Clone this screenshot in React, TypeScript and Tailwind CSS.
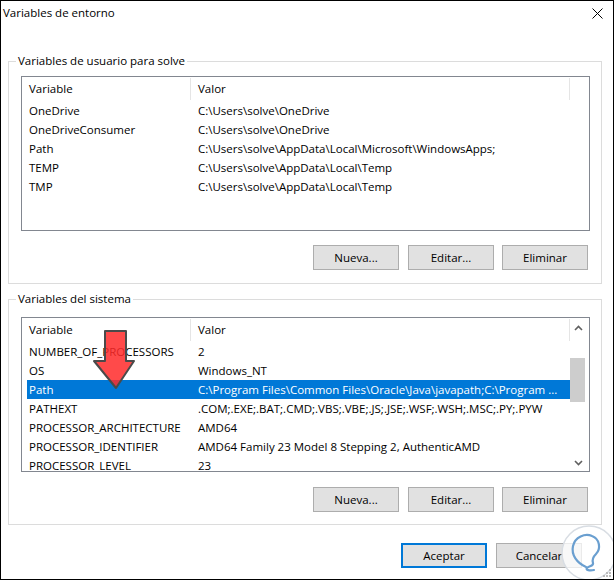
import React from "react";

type Row = { name: string; value: string };

const userRows: Row[] = [
  { name: "OneDrive", value: "C:\\Users\\solve\\OneDrive" },
  { name: "OneDriveConsumer", value: "C:\\Users\\solve\\OneDrive" },
  { name: "Path", value: "C:\\Users\\solve\\AppData\\Local\\Microsoft\\WindowsApps;" },
  { name: "TEMP", value: "C:\\Users\\solve\\AppData\\Local\\Temp" },
  { name: "TMP", value: "C:\\Users\\solve\\AppData\\Local\\Temp" },
];

const systemRows: Row[] = [
  { name: "NUMBER_OF_PROCESSORS", value: "2" },
  { name: "OS", value: "Windows_NT" },
  { name: "Path", value: "C:\\Program Files\\Common Files\\Oracle\\Java\\javapath;C:\\Program ..." },
  { name: "PATHEXT", value: ".COM;.EXE;.BAT;.CMD;.VBS;.VBE;.JS;.JSE;.WSF;.WSH;.MSC;.PY;.PYW" },
  { name: "PROCESSOR_ARCHITECTURE", value: "AMD64" },
  { name: "PROCESSOR_IDENTIFIER", value: "AMD64 Family 23 Model 8 Stepping 2, AuthenticAMD" },
  { name: "PROCESSOR_LEVEL", value: "23" },
];

function Chevron({ up }: { up?: boolean }) {
  return (
    <svg width="9" height="6" viewBox="0 0 9 6">
      <path
        d={up ? "M1 5 L4.5 1.5 L8 5" : "M1 1 L4.5 4.5 L8 1"}
        fill="none"
        stroke="#606060"
        strokeWidth="1.6"
      />
    </svg>
  );
}

function Scrollbar() {
  return (
    <div className="w-[17px] h-full flex flex-col">
      <div className="h-[20px] flex items-center justify-center">
        <Chevron up />
      </div>
      <div className="flex-1">
        <div className="mt-[20px] h-[44px] w-[15px] bg-[#cdcdcd]" />
      </div>
      <div className="h-[17px] flex items-center justify-center">
        <Chevron />
      </div>
    </div>
  );
}

function ListView({ rows, scroll, selected }: { rows: Row[]; scroll?: boolean; selected?: number }) {
  return (
    <div className="h-[155px] border border-[#828790] bg-white flex overflow-hidden">
      <div className="w-[548px] flex flex-col">
        {/* header */}
        <div className="h-[24px] shrink-0 flex">
          <div className="w-[169px] pl-[7px] flex items-center border-r border-[#e5e5e5] my-[1px]">Variable</div>
          <div className="flex-1 pl-[7px] flex items-center border-r border-[#e5e5e5] my-[1px]">Valor</div>
        </div>
        {/* rows */}
        <div className="flex-1 overflow-hidden">
          {rows.map((r, i) => (
            <div
              key={r.name}
              className={
                i === selected
                  ? "h-[19px] ml-[5px] flex items-center bg-[#0078d7] text-white"
                  : "h-[19px] ml-[5px] flex items-center"
              }
            >
              <div className="w-[164px] pl-[2px] whitespace-nowrap">{r.name}</div>
              <div className="flex-1 pl-[7px] whitespace-nowrap overflow-hidden">{r.value}</div>
            </div>
          ))}
        </div>
      </div>
      <div className="w-[18px]">{scroll && <Scrollbar />}</div>
    </div>
  );
}

function Btn({ label, primary, extra }: { label: string; primary?: boolean; extra?: string }) {
  return (
    <div
      className={
        (primary
          ? "border-2 border-[#0078d7] "
          : "border border-[#adadad] ") +
        "w-[86px] h-[25px] bg-[#e1e1e1] flex items-center justify-center " +
        (extra ?? "")
      }
    >
      {label}
    </div>
  );
}

function Group({ title, rows, scroll, selected, h, listTop, btnTop }: {
  title: string; rows: Row[]; scroll?: boolean; selected?: number; h: string; listTop: string; btnTop: string;
}) {
  return (
    <fieldset className={"ml-[7px] mr-[11px] border border-[#dcdcdc] " + h}>
      <legend className="ml-[7px] px-[2px] h-[16px] leading-[16px]">{title}</legend>
      <div className={"pl-[12px] pr-[11px] " + listTop}>
        <ListView rows={rows} scroll={scroll} selected={selected} />
        <div className={"flex justify-end gap-[8px] pr-[2px] " + btnTop}>
          <Btn label="Nueva..." extra="mr-[1px]" />
          <Btn label="Editar..." />
          <Btn label="Eliminar" />
        </div>
      </div>
    </fieldset>
  );
}

function Watermark() {
  return (
    <svg className="absolute left-[558px] top-[522px]" width="58" height="58" viewBox="0 0 58 58">
      <circle cx="30" cy="30" r="27" fill="#ffffff" fillOpacity="0.75" stroke="#d8dde3" strokeWidth="1.5" />
      <path
        d="M27 44 C18 40 12 32 14 23 C16 14 26 10 33 13 C41 16 42 26 37 31 C34 34 33 37 34 40 C35 43 30 43 28 45 C26 47 31 48 35 47"
        fill="none"
        stroke="#6a9fd0"
        strokeWidth="2.2"
        strokeLinecap="round"
        strokeLinejoin="round"
      />
    </svg>
  );
}

function Grip() {
  const dots = [
    [8, 0],
    [5, 3], [8, 3],
    [2, 6], [5, 6], [8, 6],
  ];
  return (
    <svg className="absolute right-[2px] bottom-[2px]" width="10" height="8" viewBox="0 0 10 8">
      {dots.map(([x, y], i) => (
        <rect key={i} x={x} y={y} width="2" height="2" fill="#bcbcbc" />
      ))}
    </svg>
  );
}

function RedArrow() {
  return (
    <svg className="absolute left-[90px] top-[327px]" width="48" height="64" viewBox="0 0 48 64">
      <path
        d="M14 3 L35 3 L35 33 L43 33 L25 60 L3 33 L14 33 Z"
        fill="#ff2a2a"
        fillOpacity="0.85"
        stroke="#4a4a4a"
        strokeWidth="2"
        strokeLinejoin="round"
      />
    </svg>
  );
}

export default function App() {
  return (
    <div className="relative w-[614px] h-[580px] border border-black bg-white text-black text-[11.5px] font-['Open_Sans',sans-serif] overflow-hidden">
      {/* title bar */}
      <div className="h-[24px] flex items-center justify-between pl-[2px] pr-[10px]">
        <span className="text-[11.5px]">Variables de entorno</span>
        <svg width="11" height="11" viewBox="0 0 11 11">
          <path d="M0.5 0.5 L10.5 10.5 M10.5 0.5 L0.5 10.5" stroke="#000" strokeWidth="1" />
        </svg>
      </div>

      <div className="mt-[28px]">
        <Group title="Variables de usuario para solve" rows={userRows} h="h-[231px]" listTop="mt-[7px]" btnTop="mt-[14px]" />
      </div>

      <div className="mt-[7px]">
        <Group
          title="Variables del sistema"
          rows={systemRows}
          scroll
          selected={2}
          h="h-[234px]"
          listTop="mt-[10px]"
          btnTop="mt-[15px]"
        />
      </div>

      {/* dialog buttons */}
      <div className="flex justify-end gap-[9px] mt-[18px] pr-[31px]">
        <Btn label="Aceptar" primary />
        <Btn label="Cancelar" />
      </div>

      <RedArrow />
      <Watermark />
      <Grip />
    </div>
  );
}
